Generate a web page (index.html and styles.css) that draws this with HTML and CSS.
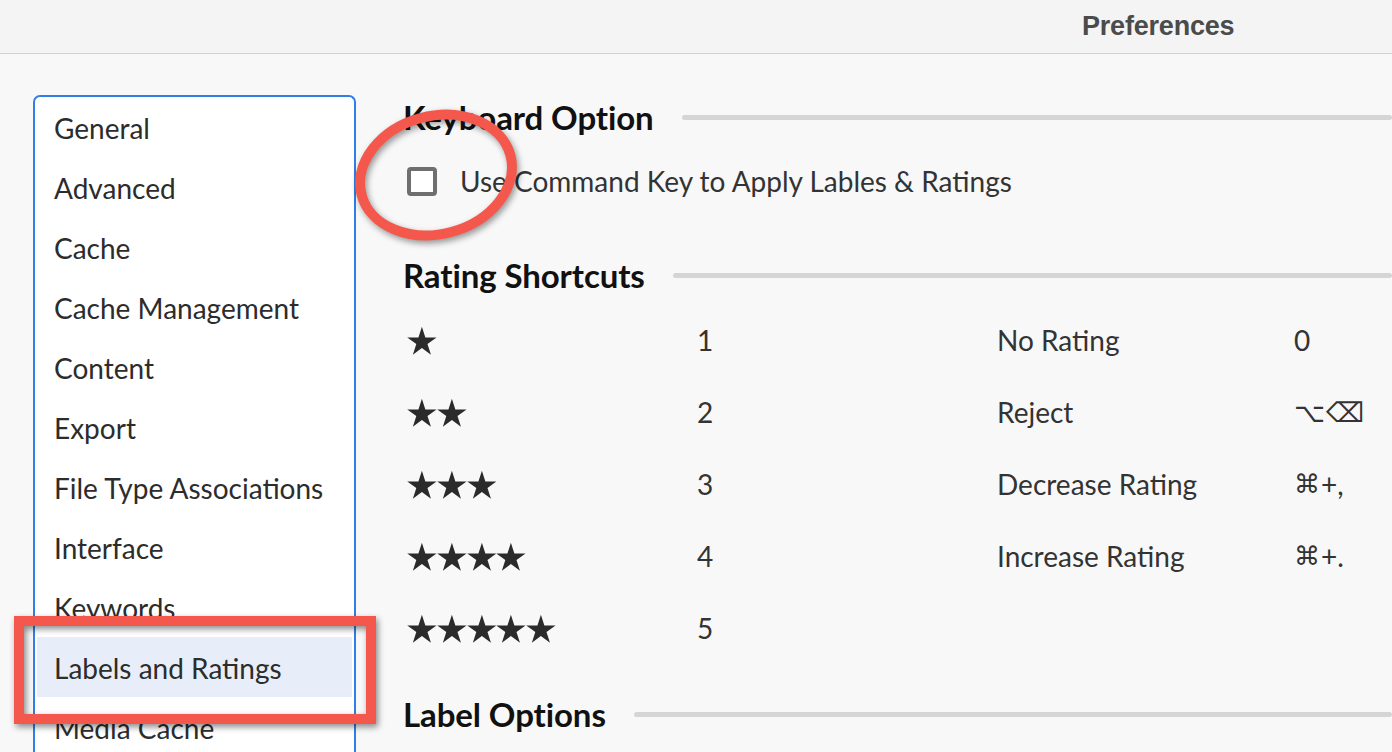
FILE: index.html
```html
<!DOCTYPE html>
<html lang="en">
<head>
<meta charset="utf-8">
<title>Preferences</title>
<link rel="stylesheet" href="styles.css">
</head>
<body>
<header class="titlebar"><span class="title">Preferences</span></header>
<main class="main">
  <nav class="sidebar">
    <div class="item">General</div>
    <div class="item">Advanced</div>
    <div class="item">Cache</div>
    <div class="item">Cache Management</div>
    <div class="item">Content</div>
    <div class="item">Export</div>
    <div class="item">File Type Associations</div>
    <div class="item">Interface</div>
    <div class="item">Keywords</div>
    <div class="item selected">Labels and Ratings</div>
    <div class="item">Media Cache</div>
  </nav>
  <section class="content">
    <div class="heading first"><h2>Keyboard Option</h2><span class="rule"></span></div>
    <label class="check-row"><span class="checkbox"></span><span>Use Command Key to Apply Lables &amp; Ratings</span></label>
    <div class="heading second"><h2>Rating Shortcuts</h2><span class="rule"></span></div>
    <div class="grid">
      <div class="stars"><svg class="star" viewBox="0 0 30 29"><path d="M15 0.7L18.48 11.41L29.74 11.41L20.63 18.03L24.11 28.74L15 22.12L5.89 28.74L9.37 18.03L0.26 11.41L11.52 11.41Z"/></svg></div>
      <div class="cell">1</div>
      <div class="cell">No Rating</div>
      <div class="cell">0</div>

      <div class="stars"><svg class="star" viewBox="0 0 30 29"><path d="M15 0.7L18.48 11.41L29.74 11.41L20.63 18.03L24.11 28.74L15 22.12L5.89 28.74L9.37 18.03L0.26 11.41L11.52 11.41Z"/></svg><svg class="star" viewBox="0 0 30 29"><path d="M15 0.7L18.48 11.41L29.74 11.41L20.63 18.03L24.11 28.74L15 22.12L5.89 28.74L9.37 18.03L0.26 11.41L11.52 11.41Z"/></svg></div>
      <div class="cell">2</div>
      <div class="cell">Reject</div>
      <div class="cell keys">⌥⌫</div>

      <div class="stars"><svg class="star" viewBox="0 0 30 29"><path d="M15 0.7L18.48 11.41L29.74 11.41L20.63 18.03L24.11 28.74L15 22.12L5.89 28.74L9.37 18.03L0.26 11.41L11.52 11.41Z"/></svg><svg class="star" viewBox="0 0 30 29"><path d="M15 0.7L18.48 11.41L29.74 11.41L20.63 18.03L24.11 28.74L15 22.12L5.89 28.74L9.37 18.03L0.26 11.41L11.52 11.41Z"/></svg><svg class="star" viewBox="0 0 30 29"><path d="M15 0.7L18.48 11.41L29.74 11.41L20.63 18.03L24.11 28.74L15 22.12L5.89 28.74L9.37 18.03L0.26 11.41L11.52 11.41Z"/></svg></div>
      <div class="cell">3</div>
      <div class="cell">Decrease Rating</div>
      <div class="cell keys"><span class="sym">⌘</span>+,</div>

      <div class="stars"><svg class="star" viewBox="0 0 30 29"><path d="M15 0.7L18.48 11.41L29.74 11.41L20.63 18.03L24.11 28.74L15 22.12L5.89 28.74L9.37 18.03L0.26 11.41L11.52 11.41Z"/></svg><svg class="star" viewBox="0 0 30 29"><path d="M15 0.7L18.48 11.41L29.74 11.41L20.63 18.03L24.11 28.74L15 22.12L5.89 28.74L9.37 18.03L0.26 11.41L11.52 11.41Z"/></svg><svg class="star" viewBox="0 0 30 29"><path d="M15 0.7L18.48 11.41L29.74 11.41L20.63 18.03L24.11 28.74L15 22.12L5.89 28.74L9.37 18.03L0.26 11.41L11.52 11.41Z"/></svg><svg class="star" viewBox="0 0 30 29"><path d="M15 0.7L18.48 11.41L29.74 11.41L20.63 18.03L24.11 28.74L15 22.12L5.89 28.74L9.37 18.03L0.26 11.41L11.52 11.41Z"/></svg></div>
      <div class="cell">4</div>
      <div class="cell">Increase Rating</div>
      <div class="cell keys"><span class="sym">⌘</span>+.</div>

      <div class="stars"><svg class="star" viewBox="0 0 30 29"><path d="M15 0.7L18.48 11.41L29.74 11.41L20.63 18.03L24.11 28.74L15 22.12L5.89 28.74L9.37 18.03L0.26 11.41L11.52 11.41Z"/></svg><svg class="star" viewBox="0 0 30 29"><path d="M15 0.7L18.48 11.41L29.74 11.41L20.63 18.03L24.11 28.74L15 22.12L5.89 28.74L9.37 18.03L0.26 11.41L11.52 11.41Z"/></svg><svg class="star" viewBox="0 0 30 29"><path d="M15 0.7L18.48 11.41L29.74 11.41L20.63 18.03L24.11 28.74L15 22.12L5.89 28.74L9.37 18.03L0.26 11.41L11.52 11.41Z"/></svg><svg class="star" viewBox="0 0 30 29"><path d="M15 0.7L18.48 11.41L29.74 11.41L20.63 18.03L24.11 28.74L15 22.12L5.89 28.74L9.37 18.03L0.26 11.41L11.52 11.41Z"/></svg><svg class="star" viewBox="0 0 30 29"><path d="M15 0.7L18.48 11.41L29.74 11.41L20.63 18.03L24.11 28.74L15 22.12L5.89 28.74L9.37 18.03L0.26 11.41L11.52 11.41Z"/></svg></div>
      <div class="cell">5</div>
      <div class="cell"></div>
      <div class="cell"></div>
    </div>
    <div class="heading third"><h2>Label Options</h2><span class="rule"></span></div>
  </section>
</main>
<svg class="annot-ellipse" width="200" height="160" viewBox="0 0 200 160"><ellipse cx="96" cy="80" rx="77" ry="59" transform="rotate(-15 96 80)"/></svg>
<div class="annot-rect"></div>
</body>
</html>
```
FILE: styles.css
```css
* { box-sizing: border-box; }
html, body { margin: 0; padding: 0; }
body {
  width: 1392px;
  height: 752px;
  overflow: hidden;
  background: #f8f8f8;
  font-family: "Lato", "DejaVu Sans", sans-serif;
  color: #2c2c2c;
  position: relative;
}
.titlebar {
  height: 54px;
  background: #f4f4f4;
  border-bottom: 1px solid #d2d2d2;
  display: flex;
  align-items: center;
  padding-left: 1082px;
}
.title {
  font-family: "Liberation Sans", Arial, sans-serif;
  font-weight: bold;
  font-size: 27px;
  color: #4b4b4b;
  letter-spacing: -0.2px;
}
.main {
  display: flex;
  padding-top: 41px;
  padding-left: 33px;
  gap: 47px;
}
.sidebar {
  width: 323px;
  flex: none;
  height: 700px;
  background: #fff;
  border: 2px solid #2f7fe6;
  border-bottom: none;
  border-radius: 7px 7px 0 0;
  padding: 0 2px;
}
.item {
  height: 60px;
  display: flex;
  align-items: center;
  padding-left: 17px;
  padding-top: 2px;
  font-size: 28px;
  color: #2c2c2c;
  white-space: nowrap;
}
.item.selected { background: #e8eef9; }
.content {
  flex: 1;
  min-width: 0;
}
.heading {
  display: flex;
  align-items: center;
  height: 40px;
}
.heading h2 {
  margin: 0;
  font-size: 33px;
  font-weight: bold;
  color: #111;
  white-space: nowrap;
  letter-spacing: -0.1px;
}
.heading .rule {
  flex: 1;
  height: 5px;
  border-radius: 3px;
  background: #d5d5d5;
  margin-left: 28px;
}
.heading.first { margin-top: 2px; }
.heading.second { margin-top: 52px; }
.heading.third { margin-top: 30px; }
.check-row {
  display: flex;
  align-items: center;
  height: 44px;
  margin-top: 22px;
  padding-left: 4px;
  font-size: 28px;
  color: #333;
}
.checkbox {
  width: 30px;
  height: 29px;
  border: 4px solid #6f6f6f;
  border-radius: 4px;
  background: #fff;
  margin-right: 23px;
  flex: none;
}
.grid {
  display: grid;
  grid-template-columns: 294px 300px 297px 1fr;
  grid-auto-rows: 72px;
  margin-top: 9px;
  font-size: 28px;
  color: #333;
}
.cell {
  display: flex;
  align-items: center;
  white-space: nowrap;
}
.stars {
  display: flex;
  align-items: center;
  padding-left: 4px;
}
.star {
  width: 29.8px;
  height: 29px;
  fill: #2b2b2b;
  flex: none;
}
.keys { font-size: 28px; }
.keys .sym,
.keys:not(:has(.sym)) { font-family: "DejaVu Sans", sans-serif; }
.keys .sym { font-size: 26px; margin-right: 1px; }
.keys:not(:has(.sym)) { font-size: 27px; letter-spacing: 1px; }
.annot-ellipse {
  position: absolute;
  left: 340px;
  top: 95px;
  fill: none;
  stroke: #f4584c;
  stroke-width: 10px;
  filter: drop-shadow(2px 3px 3px rgba(0, 0, 0, 0.4));
}
.annot-rect {
  position: absolute;
  left: 14px;
  top: 616px;
  width: 362px;
  height: 108px;
  border: 10px solid #f4584c;
  filter: drop-shadow(2px 3px 3px rgba(0, 0, 0, 0.45));
}
```
